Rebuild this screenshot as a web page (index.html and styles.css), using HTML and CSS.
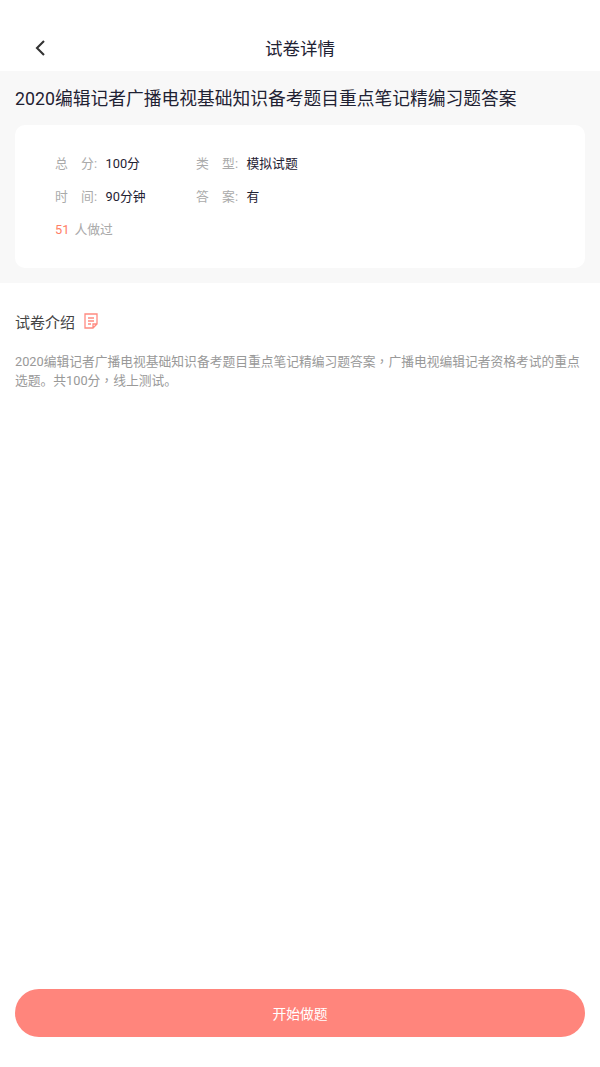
FILE: index.html
```html
<!DOCTYPE html>
<html lang="zh">
<head>
<meta charset="utf-8">
<title>试卷详情</title>
<link rel="stylesheet" href="styles.css">
</head>
<body>
<div class="page">
  <header class="nav">
    <svg class="back" width="12" height="18" viewBox="0 0 12 18"><path d="M10 2 L3 9 L10 16" fill="none" stroke="#333" stroke-width="2.1"/></svg>
    <h1 class="nav-title">试卷详情</h1>
  </header>
  <section class="summary">
    <h2 class="paper-title">2020编辑记者广播电视基础知识备考题目重点笔记精编习题答案</h2>
    <div class="card">
      <div class="row">
        <div class="field"><span class="label"><span>总</span><span>分:</span></span><span class="value">100分</span></div>
        <div class="field"><span class="label"><span>类</span><span>型:</span></span><span class="value">模拟试题</span></div>
      </div>
      <div class="row">
        <div class="field"><span class="label"><span>时</span><span>间:</span></span><span class="value">90分钟</span></div>
        <div class="field"><span class="label"><span>答</span><span>案:</span></span><span class="value">有</span></div>
      </div>
      <div class="done"><span class="count">51</span><span>人做过</span></div>
    </div>
  </section>
  <section class="intro">
    <div class="intro-head">
      <h3 class="intro-title">试卷介绍</h3>
      <svg width="14" height="16" viewBox="0 0 14 16"><path d="M1 1 H13 V11 L9 15 H1 Z M9 15 V11 H13 M4 5 H10 M4 8 H10 M4 11 H7" fill="none" stroke="#ff8a80" stroke-width="1.3"/></svg>
    </div>
    <p class="intro-text"><span class="line">2020编辑记者广播电视基础知识备考题目重点笔记精编习题答案<span class="centered" lang="zh-Hant">，</span>广播电视编辑记者资格考试的重点</span><span class="line">选题。共100分<span class="centered" lang="zh-Hant">，</span>线上测试。</span></p>
  </section>
  <div class="footer"><button class="start">开始做题</button></div>
</div>
</body>
</html>
```
FILE: styles.css
```css
* { box-sizing: border-box; margin: 0; padding: 0; }
html, body { height: 100%; }
body { background: #fff; font-family: "Roboto", "Noto Sans CJK SC", sans-serif; color: #1f2233; }
.page { height: 1067px; display: flex; flex-direction: column; overflow: hidden; }
.nav { height: 71px; padding: 28px 0 0; position: relative; display: flex; justify-content: center; }
.back { position: absolute; left: 34px; top: 39px; }
.nav-title { font-size: 17.5px; font-weight: 400; line-height: 42px; height: 42px; }
.summary { background: #f8f8f8; height: 212px; padding: 16px 15px 0; }
.paper-title { font-size: 17.75px; font-weight: 400; line-height: 25px; white-space: nowrap; }
.card { margin-top: 13px; height: 143px; background: #fff; border-radius: 10px; padding: 22px 40px 0; font-size: 12.8px; }
.row { display: flex; height: 33px; }
.field { width: 141px; display: flex; line-height: 33px; height: 33px; }
.label { width: 42px; margin-right: 8.5px; display: flex; justify-content: space-between; color: #aaa; }
.value { color: #1f2233; }
.done { display: flex; gap: 5px; line-height: 33px; color: #aaa; }
.count { color: #ff7f66; }
.intro { flex: 1; padding: 26px 15px 0; }
.intro-head { display: flex; align-items: center; gap: 9px; height: 24px; }
.intro-title { font-size: 15px; font-weight: 400; color: #444; }
.intro-text { margin-top: 19px; font-size: 12.78px; line-height: 19px; color: #999; }
.line { display: block; white-space: nowrap; }
.centered { display: inline-block; width: 1em; font-family: "Noto Sans CJK TC", sans-serif; line-height: 1; }
.footer { padding: 0 15px 30px; }
.start { width: 100%; height: 48px; border: 0; border-radius: 24px; background: #ff857c; color: #fff; font: inherit; font-size: 13.8px; }
```
